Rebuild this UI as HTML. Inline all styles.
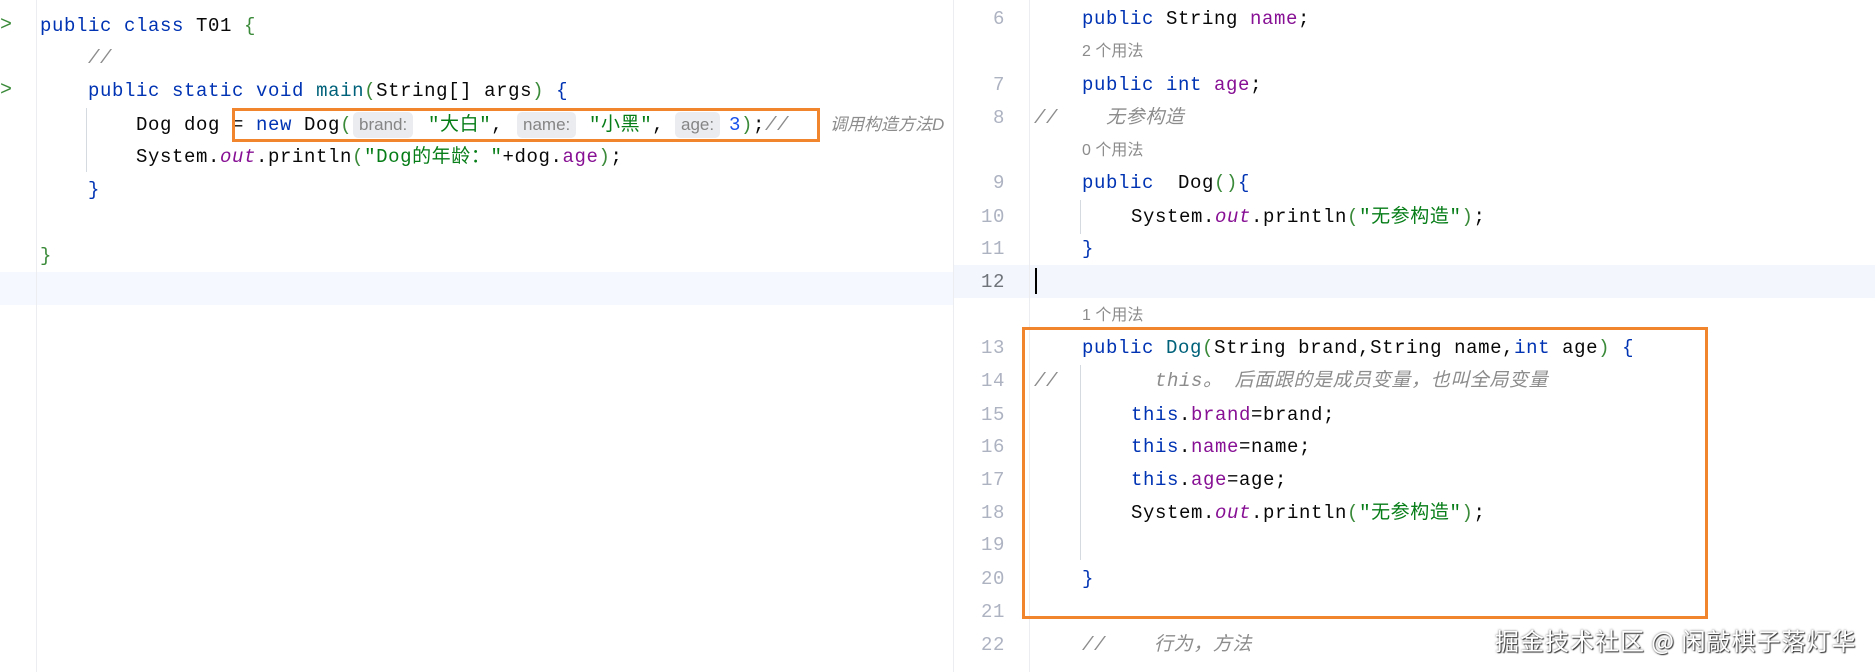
<!DOCTYPE html>
<html><head><meta charset="utf-8"><style>
*{margin:0;padding:0}
body{width:1875px;height:672px;background:#fff;position:relative;overflow:hidden;font-family:"Liberation Mono","Noto Sans CJK SC",monospace;font-size:19px;letter-spacing:.6px;color:#080808}
.a{position:absolute;white-space:pre;line-height:24px}
.k{color:#0033b3}.s{color:#067d17}.f{color:#871094}.c{color:#8c8c8c;font-style:italic}.n{color:#1750eb}.g{color:#3a8a3a}
.ln{position:absolute;width:60px;left:945px;text-align:right;color:#aeb3c2;font-size:19px;line-height:24px}
.h{position:absolute;background:#ebecf0;color:#858585;border-radius:5px;font-family:"Liberation Sans",sans-serif;font-size:17px;letter-spacing:0;line-height:26px;padding:0 6px;height:26px}
.u{color:#8c8c8c;font-family:"Liberation Sans","Noto Sans CJK SC",sans-serif;font-size:16px;letter-spacing:0}
.box{position:absolute;border:3px solid #f0852d;box-sizing:border-box}
.vl{position:absolute;width:1px;background:#d5d9e0}
</style></head><body>
<!-- left pane -->
<div style="position:absolute;left:0;top:272px;width:953px;height:33px;background:#f5f8fe"></div>
<div class="vl" style="left:36px;top:0;height:672px;background:#ebedf0"></div>
<div class="vl" style="left:86px;top:108px;height:64px"></div>
<div class="a g" style="left:0;top:14px;font-size:20px">&gt;</div>
<div class="a g" style="left:0;top:79px;font-size:20px">&gt;</div>
<div class="a" style="left:40px;top:14px"><span class="k">public class</span> T01 <span class="g">{</span></div>
<div class="a c" style="left:88px;top:46px">//</div>
<div class="a" style="left:88px;top:79px"><span class="k">public static void</span> <span style="color:#00627a">main</span><span class="g">(</span>String[] args<span class="g">)</span> <span class="k">{</span></div>
<div class="a" style="left:136px;top:113px">Dog dog = <span class="k">new</span> Dog<span class="g">(</span></div>
<div class="h" style="left:353px;top:112px">brand:</div>
<div class="a s" style="left:428px;top:113px">"大白"<span style="color:#080808">,</span></div>
<div class="h" style="left:517px;top:112px">name:</div>
<div class="a s" style="left:589px;top:113px">"小黑"<span style="color:#080808">,</span></div>
<div class="h" style="left:675px;top:112px">age:</div>
<div class="a" style="left:729px;top:113px"><span class="n">3</span><span class="g">)</span>;<span class="c">//</span></div>
<div class="a c" style="left:830px;top:113px;width:123px;overflow:hidden;font-family:'Liberation Sans','Noto Sans CJK SC',sans-serif;font-size:17px;letter-spacing:0">调用构造方法D</div>
<div class="a" style="left:136px;top:145px">System.<span class="f" style="font-style:italic">out</span>.println<span class="g">(</span><span class="s">"Dog的年龄："</span>+dog.<span class="f">age</span><span class="g">)</span>;</div>
<div class="a k" style="left:88px;top:178px">}</div>
<div class="a g" style="left:40px;top:244px">}</div>
<div class="box" style="left:232px;top:108px;width:588px;height:34px"></div>
<!-- divider -->
<div class="vl" style="left:953px;top:0;height:672px;background:#ebedf0"></div>
<!-- right pane -->
<div style="position:absolute;left:954px;top:265px;width:921px;height:33px;background:#f3f6fc"></div>
<div class="vl" style="left:1029px;top:0;height:672px;background:#ebedf0"></div>
<div class="vl" style="left:1080px;top:200px;height:34px"></div>
<div class="vl" style="left:1080px;top:365px;height:195px"></div>
<div style="position:absolute;left:1035px;top:268px;width:2px;height:26px;background:#000"></div>
<div class="ln" style="top:7px">6</div>
<div class="ln" style="top:73px">7</div>
<div class="ln" style="top:106px">8</div>
<div class="ln" style="top:171px">9</div>
<div class="ln" style="top:205px">10</div>
<div class="ln" style="top:237px">11</div>
<div class="ln" style="top:270px;color:#6f737a">12</div>
<div class="ln" style="top:336px">13</div>
<div class="ln" style="top:369px">14</div>
<div class="ln" style="top:403px">15</div>
<div class="ln" style="top:435px">16</div>
<div class="ln" style="top:468px">17</div>
<div class="ln" style="top:501px">18</div>
<div class="ln" style="top:533px">19</div>
<div class="ln" style="top:567px">20</div>
<div class="ln" style="top:600px">21</div>
<div class="ln" style="top:633px">22</div>
<div class="a" style="left:1082px;top:7px"><span class="k">public</span> String <span class="f">name</span>;</div>
<div class="a u" style="left:1082px;top:40px">2 个用法</div>
<div class="a" style="left:1082px;top:73px"><span class="k">public int</span> <span class="f">age</span>;</div>
<div class="a c" style="left:1034px;top:106px">//    无参构造</div>
<div class="a u" style="left:1082px;top:139px">0 个用法</div>
<div class="a" style="left:1082px;top:171px"><span class="k">public</span>  Dog<span class="g">()</span><span class="k">{</span></div>
<div class="a" style="left:1131px;top:205px">System.<span class="f" style="font-style:italic">out</span>.println<span class="g">(</span><span class="s">"无参构造"</span><span class="g">)</span>;</div>
<div class="a k" style="left:1082px;top:237px">}</div>
<div class="a u" style="left:1082px;top:304px">1 个用法</div>
<div class="a" style="left:1082px;top:336px"><span class="k">public</span> <span style="color:#00627a">Dog</span><span class="g">(</span>String brand,String name,<span class="k">int</span> age<span class="g">)</span> <span class="k">{</span></div>
<div class="a c" style="left:1034px;top:369px">//</div>
<div class="a c" style="left:1155px;top:369px">this。 后面跟的是成员变量，也叫全局变量</div>
<div class="a" style="left:1131px;top:403px"><span class="k">this</span>.<span class="f">brand</span>=brand;</div>
<div class="a" style="left:1131px;top:435px"><span class="k">this</span>.<span class="f">name</span>=name;</div>
<div class="a" style="left:1131px;top:468px"><span class="k">this</span>.<span class="f">age</span>=age;</div>
<div class="a" style="left:1131px;top:501px">System.<span class="f" style="font-style:italic">out</span>.println<span class="g">(</span><span class="s">"无参构造"</span><span class="g">)</span>;</div>
<div class="a k" style="left:1082px;top:567px">}</div>
<div class="a c" style="left:1082px;top:633px">//    行为，方法</div>
<div class="box" style="left:1022px;top:327px;width:686px;height:292px"></div>
<div class="a" style="left:1495px;top:626px;font-family:'Noto Sans CJK SC',sans-serif;font-size:24px;letter-spacing:1px;line-height:28px;color:#fff;text-shadow:1px 1px 1px #333,0 0 2px #666">掘金技术社区 @ 闲敲棋子落灯华</div>
</body></html>
